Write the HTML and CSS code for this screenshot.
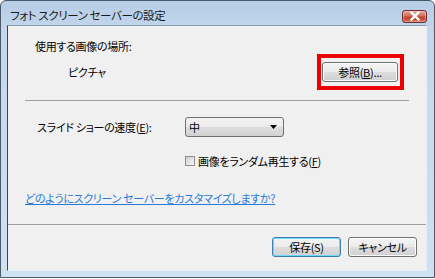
FILE: index.html
```html
<!DOCTYPE html>
<html lang="ja">
<head>
  <meta charset="utf-8" />
  <title>フォト スクリーン セーバーの設定</title>
  <link rel="stylesheet" href="styles.css">
</head>
<body>
  <div class="window">
    <div class="titlebar">
      <span class="title">フォト スクリーン セーバーの設定</span>
      <button class="close-btn" aria-label="閉じる">
        <svg width="12" height="10" viewBox="0 0 12 10">
          <path d="M2.5 1.5 L9.5 8.5 M9.5 1.5 L2.5 8.5" stroke="#fff" stroke-width="2.4" stroke-linecap="square" />
        </svg>
      </button>
    </div>

    <div class="client">
      <div class="panel">
        <div class="label-row">使用する画像の場所:</div>
        <div class="folder-row">
          <span class="folder-name">ピクチャ</span>
          <span class="highlight">
            <button class="btn btn-browse">参照(<u>B</u>)...</button>
          </span>
        </div>

        <div class="separator"></div>

        <div class="option-grid">
          <div class="option-label">スライド ショーの速度(<u>E</u>):</div>
          <div class="combo">
            <span>中</span>
            <svg width="7" height="4" viewBox="0 0 7 4"><path d="M0 0 H7 L3.5 4 Z" fill="#000" /></svg>
          </div>
          <div></div>
          <label class="check">
            <span class="check-box"></span>
            <span>画像をランダム再生する(<u>F</u>)</span>
          </label>
        </div>

        <a class="help-link" href="#">どのようにスクリーン セーバーをカスタマイズしますか?</a>
      </div>

      <div class="footer">
        <button class="btn btn-default">保存(S)</button>
        <button class="btn">キャンセル</button>
      </div>
    </div>
  </div>
</body>
</html>
```

FILE: styles.css
```css
* {
  margin: 0;
  padding: 0;
  box-sizing: border-box;
}

body {
  width: 435px;
  height: 279px;
  overflow: hidden;
  background-color: #fff;
  font-family: "Noto Sans CJK JP", "Noto Sans", sans-serif;
  font-size: 11px;
  font-feature-settings: "palt";
  letter-spacing: -0.3px;
  color: #000;
}

.window {
  width: 435px;
  height: 278px;
  border: 1px solid #4a5a6a;
  border-radius: 6px 6px 0 0;
  background: linear-gradient(to bottom, #b6cde6 0%, #c4d8ed 12%, #c9dcef 60%, #cfe1f3 100%);
  display: flex;
  flex-direction: column;
  padding: 0 7px 6px 6px;
}

.titlebar {
  height: 24px;
  display: flex;
  align-items: center;
  justify-content: space-between;
  padding-left: 3px;
}

.title {
  line-height: 16px;
  font-size: 11.5px;
  letter-spacing: -0.4px;
  color: #1a1a1a;
  margin-top: 3px;
}

.close-btn {
  width: 25px;
  height: 13px;
  margin-top: 6px;
  border: 1px solid #6d2b2b;
  border-radius: 3px;
  background: linear-gradient(to bottom, #e8a193 0%, #d4715f 45%, #c2402c 55%, #d56a50 100%);
  display: flex;
  align-items: center;
  justify-content: center;
  box-shadow: inset 0 0 0 1px rgba(255, 255, 255, 0.35);
}

.client {
  flex: 1;
  background-color: #f0f0f0;
  border-left: 1px solid #3d4650;
  border-top: 1px solid #8b9aa8;
  border-right: 1px solid #e6eef6;
  border-bottom: 1px solid #e6eef6;
  display: flex;
  flex-direction: column;
}

.panel {
  height: 199px;
  border-bottom: 1px solid #a0a0a0;
  padding: 12px 17px 0 17px;
}

.label-row {
  line-height: 16px;
  padding-left: 10px;
}

.folder-row {
  display: flex;
  align-items: center;
  justify-content: space-between;
  padding-left: 43px;
  padding-right: 5px;
}

.highlight {
  display: block;
  border: 4px solid #ee0000;
  padding: 4px 2px 4px 1px;
}

.btn {
  height: 20px;
  border: 1px solid #707070;
  border-radius: 3px;
  background: linear-gradient(to bottom, #f4f4f4 0%, #ebebeb 48%, #dddddd 52%, #d0d0d0 100%);
  box-shadow: inset 0 0 0 1px #fcfcfc;
  font-family: inherit;
  font-size: 11px;
  font-feature-settings: "palt";
  letter-spacing: -0.3px;
  color: #000;
  display: flex;
  align-items: center;
  justify-content: center;
}

.btn-browse {
  width: 76px;
}

.separator {
  margin-top: 10px;
  height: 1px;
  background-color: #a0a0a0;
}

.option-grid {
  margin-top: 16px;
  display: grid;
  grid-template-columns: 160px 99px;
  row-gap: 16px;
  align-items: center;
}

.option-label {
  padding-left: 12px;
  line-height: 16px;
}

.combo {
  height: 20px;
  border: 1px solid #707070;
  border-radius: 3px;
  background: linear-gradient(to bottom, #f3f3f3 0%, #ebebeb 48%, #dddddd 52%, #d2d2d2 100%);
  display: flex;
  align-items: center;
  justify-content: space-between;
  padding: 0 6px 0 3px;
}

.check {
  display: flex;
  align-items: center;
  gap: 3px;
  line-height: 16px;
  white-space: nowrap;
}

.check-box {
  flex: none;
  width: 10px;
  height: 10px;
  border: 1px solid #8e8f8f;
  background: linear-gradient(135deg, #cbcfd5 0%, #f6f6f6 100%);
}

.help-link {
  display: inline-block;
  margin-top: 21px;
  line-height: 16px;
  color: #2a7ad8;
  text-decoration: underline;
}

.footer {
  flex: 1;
  display: flex;
  justify-content: flex-end;
  gap: 7px;
  padding: 12px 9px 0 0;
}

.footer .btn {
  width: 69px;
}

.btn-default {
  border-color: #3c7fb1;
  box-shadow: inset 0 0 0 1px #6bdbf8;
}
```
